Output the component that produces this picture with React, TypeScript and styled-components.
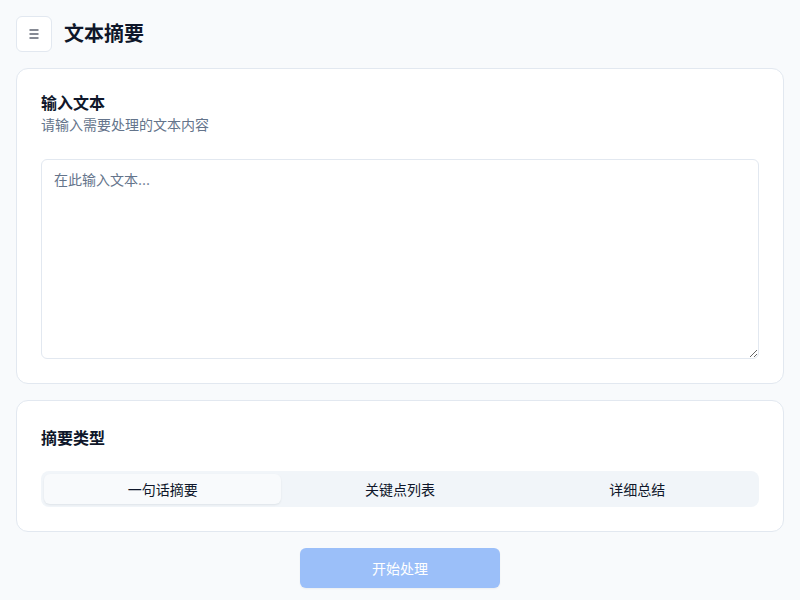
import { useState } from "react";
import styled, { createGlobalStyle } from "styled-components";

const GlobalStyle = createGlobalStyle`
  * { box-sizing: border-box; }
  body {
    margin: 0;
    background: #f8fafc;
    font-family: "Inter", "Noto Sans CJK SC", sans-serif;
    color: #0f172a;
  }
`;

const Page = styled.div`
  padding: 16px;
  display: flex;
  flex-direction: column;
  gap: 16px;
`;

const Header = styled.header`
  display: flex;
  align-items: center;
  gap: 12px;
  height: 36px;
`;

const MenuButton = styled.button`
  width: 36px;
  height: 36px;
  display: flex;
  align-items: center;
  justify-content: center;
  background: #ffffff;
  border: 1px solid #e2e8f0;
  border-radius: 6px;
  padding: 0 0 1px;
  cursor: pointer;
  color: #0f172a;
`;

const Title = styled.h1`
  margin: 0;
  font-size: 20px;
  font-weight: 700;
  line-height: 28px;
`;

const Card = styled.section`
  background: #ffffff;
  border: 1px solid #e2e8f0;
  border-radius: 12px;
  padding: 24px;
  display: flex;
  flex-direction: column;
`;

const CardTitle = styled.h2`
  margin: 0;
  font-size: 16px;
  font-weight: 600;
  line-height: 20px;
`;

const CardDesc = styled.p`
  margin: 0;
  font-size: 14px;
  line-height: 20px;
  color: #64748b;
`;

const CardHead = styled.div`
  display: flex;
  flex-direction: column;
  gap: 2px;
  margin-bottom: 24px;
`;

const SectionLabel = styled.h2`
  margin: 0 0 20px;
  font-size: 16px;
  font-weight: 600;
  line-height: 26px;
`;

const TextArea = styled.textarea`
  width: 100%;
  height: 200px;
  border: 1px solid #e2e8f0;
  border-radius: 6px;
  padding: 10px 12px;
  font-family: inherit;
  font-size: 14px;
  line-height: 20px;
  color: #0f172a;
  background: #ffffff;
  resize: vertical;
  outline: none;
  &::placeholder { color: #64748b; }
`;

const TabList = styled.div`
  display: grid;
  grid-template-columns: repeat(3, 1fr);
  height: 36px;
  padding: 3px;
  background: #f1f5f9;
  border-radius: 8px;
`;

const Tab = styled.button<{ $active: boolean }>`
  border: none;
  border-radius: 6px;
  font-family: inherit;
  font-size: 14px;
  color: #0f172a;
  background: ${(p) => (p.$active ? "#f8fafc" : "transparent")};
  box-shadow: ${(p) => (p.$active ? "0 1px 2px rgba(15,23,42,0.08)" : "none")};
  cursor: pointer;
`;

const Footer = styled.div`
  display: flex;
  justify-content: center;
`;

const Submit = styled.button`
  width: 200px;
  height: 40px;
  border: none;
  border-radius: 6px;
  background: #9bbff9;
  color: #ffffff;
  font-family: inherit;
  font-size: 14px;
  box-shadow: 0 1px 2px rgba(15,23,42,0.05);
`;

const tabs = ["一句话摘要", "关键点列表", "详细总结"];

export default function App() {
  const [active, setActive] = useState(0);
  return (
    <>
      <GlobalStyle />
      <Page>
        <Header>
          <MenuButton aria-label="菜单">
            <svg width="10" height="10" viewBox="0 0 10 10" fill="none" stroke="currentColor" strokeWidth="1.1">
              <path d="M0.5 1h9M0.5 5h9M0.5 9h9" />
            </svg>
          </MenuButton>
          <Title>文本摘要</Title>
        </Header>
        <Card>
          <CardHead>
            <CardTitle>输入文本</CardTitle>
            <CardDesc>请输入需要处理的文本内容</CardDesc>
          </CardHead>
          <TextArea placeholder="在此输入文本..." />
        </Card>
        <Card>
          <SectionLabel>摘要类型</SectionLabel>
          <TabList>
            {tabs.map((t, i) => (
              <Tab key={t} $active={i === active} onClick={() => setActive(i)}>
                {t}
              </Tab>
            ))}
          </TabList>
        </Card>
        <Footer>
          <Submit disabled>开始处理</Submit>
        </Footer>
      </Page>
    </>
  );
}
